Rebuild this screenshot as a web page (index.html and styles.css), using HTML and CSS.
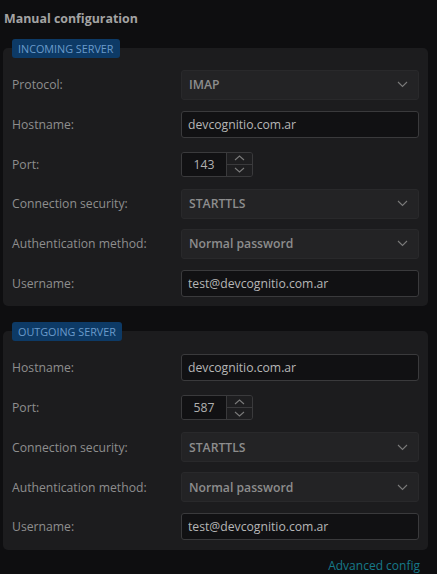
FILE: index.html
```html
<!DOCTYPE html>
<html lang="en">
<head>
    <meta charset="UTF-8">
    <title>Manual configuration</title>
    <link rel="stylesheet" href="styles.css">
</head>
<body>
    <div class="page">
        <h2 class="title">Manual configuration</h2>

        <section class="panel">
            <span class="badge">INCOMING SERVER</span>
            <div class="row">
                <label class="label">Protocol:</label>
                <div class="select">IMAP<svg class="chev" width="11" height="7" viewBox="0 0 11 7"><polyline points="1,1 5.5,5.5 10,1"/></svg></div>
            </div>
            <div class="row">
                <label class="label">Hostname:</label>
                <input class="text" type="text" value="devcognitio.com.ar">
            </div>
            <div class="row">
                <label class="label">Port:</label>
                <div class="spinner">
                    <span class="num">143</span>
                    <div class="arrows">
                        <span class="arrow"><svg width="11" height="6" viewBox="0 0 11 6"><polyline points="1,5 5.5,1 10,5"/></svg></span>
                        <span class="arrow"><svg width="11" height="6" viewBox="0 0 11 6"><polyline points="1,1 5.5,5 10,1"/></svg></span>
                    </div>
                </div>
            </div>
            <div class="row">
                <label class="label">Connection security:</label>
                <div class="select">STARTTLS<svg class="chev" width="11" height="7" viewBox="0 0 11 7"><polyline points="1,1 5.5,5.5 10,1"/></svg></div>
            </div>
            <div class="row">
                <label class="label">Authentication method:</label>
                <div class="select">Normal password<svg class="chev" width="11" height="7" viewBox="0 0 11 7"><polyline points="1,1 5.5,5.5 10,1"/></svg></div>
            </div>
            <div class="row">
                <label class="label">Username:</label>
                <input class="text" type="text" value="test@devcognitio.com.ar">
            </div>
        </section>

        <section class="panel second">
            <span class="badge">OUTGOING SERVER</span>
            <div class="row">
                <label class="label">Hostname:</label>
                <input class="text" type="text" value="devcognitio.com.ar">
            </div>
            <div class="row">
                <label class="label">Port:</label>
                <div class="spinner">
                    <span class="num">587</span>
                    <div class="arrows">
                        <span class="arrow"><svg width="11" height="6" viewBox="0 0 11 6"><polyline points="1,5 5.5,1 10,5"/></svg></span>
                        <span class="arrow"><svg width="11" height="6" viewBox="0 0 11 6"><polyline points="1,1 5.5,5 10,1"/></svg></span>
                    </div>
                </div>
            </div>
            <div class="row">
                <label class="label">Connection security:</label>
                <div class="select">STARTTLS<svg class="chev" width="11" height="7" viewBox="0 0 11 7"><polyline points="1,1 5.5,5.5 10,1"/></svg></div>
            </div>
            <div class="row">
                <label class="label">Authentication method:</label>
                <div class="select">Normal password<svg class="chev" width="11" height="7" viewBox="0 0 11 7"><polyline points="1,1 5.5,5.5 10,1"/></svg></div>
            </div>
            <div class="row">
                <label class="label">Username:</label>
                <input class="text" type="text" value="test@devcognitio.com.ar">
            </div>
        </section>

        <div class="footer">
            <a class="link" href="#">Advanced config</a>
        </div>
    </div>
</body>
</html>
```

FILE: styles.css
```css
body {
    margin: 0;
    width: 437px;
    height: 574px;
    overflow: hidden;
    background-color: #0e0e10;
    font-family: "Open Sans", sans-serif;
    font-size: 12.2px;
    color: #8e8e8e;
}
.page {
    padding: 10px 9px 0 3px;
}
.title {
    margin: 0 0 20px 1px;
    font-size: 12.4px;
    font-weight: 700;
    line-height: 18px;
    color: #a3a3a3;
}
.panel {
    display: flex;
    flex-direction: column;
    background-color: #1c1c1e;
    border-radius: 5px;
    padding: 0 9px 3px 9px;
}
.panel.second {
    margin-top: 25px;
}
.badge {
    align-self: flex-start;
    margin-top: -9px;
    margin-bottom: 7px;
    height: 19px;
    line-height: 19px;
    padding: 0 6px;
    background-color: #0d3a66;
    color: #6a9bcb;
    font-size: 10.8px;
    border-radius: 3px;
}
.row {
    display: flex;
    align-items: center;
    height: 39.7px;
}
.label {
    width: 169px;
    flex-shrink: 0;
}
.select {
    display: flex;
    align-items: center;
    justify-content: space-between;
    width: 238px;
    height: 30px;
    box-sizing: border-box;
    padding: 0 10px 0 7px;
    background-color: #232325;
    border: 1px solid #29292b;
    border-radius: 3px;
    font-weight: 600;
    color: #8d8d8d;
}
.chev polyline,
.arrow polyline {
    fill: none;
    stroke: #7a7a7a;
    stroke-width: 1.1;
}
.text {
    width: 238px;
    height: 27px;
    box-sizing: border-box;
    padding: 0 6px;
    margin: 0;
    background-color: #111113;
    border: 1px solid #3a3a3c;
    border-radius: 3px;
    font-family: inherit;
    font-size: 12.2px;
    color: #b6b6b6;
    outline: none;
}
.spinner {
    display: flex;
    width: 72px;
    height: 25px;
    box-sizing: border-box;
    border: 1px solid #3a3a3c;
    border-radius: 3px;
    overflow: hidden;
}
.num {
    width: 44px;
    line-height: 23px;
    text-align: center;
    background-color: #111113;
    color: #b0b0b0;
}
.arrows {
    flex: 1;
    display: flex;
    flex-direction: column;
    border-left: 1px solid #3a3a3c;
    background-color: #1e1e20;
}
.arrow {
    flex: 1;
    display: flex;
    align-items: center;
    justify-content: center;
}
.arrow + .arrow {
    border-top: 1px solid #3a3a3c;
}
.footer {
    display: flex;
    justify-content: flex-end;
    padding-right: 8px;
    margin-top: 7px;
}
.link {
    line-height: 18px;
    font-size: 12px;
    color: #17798a;
    text-decoration: none;
}
```
